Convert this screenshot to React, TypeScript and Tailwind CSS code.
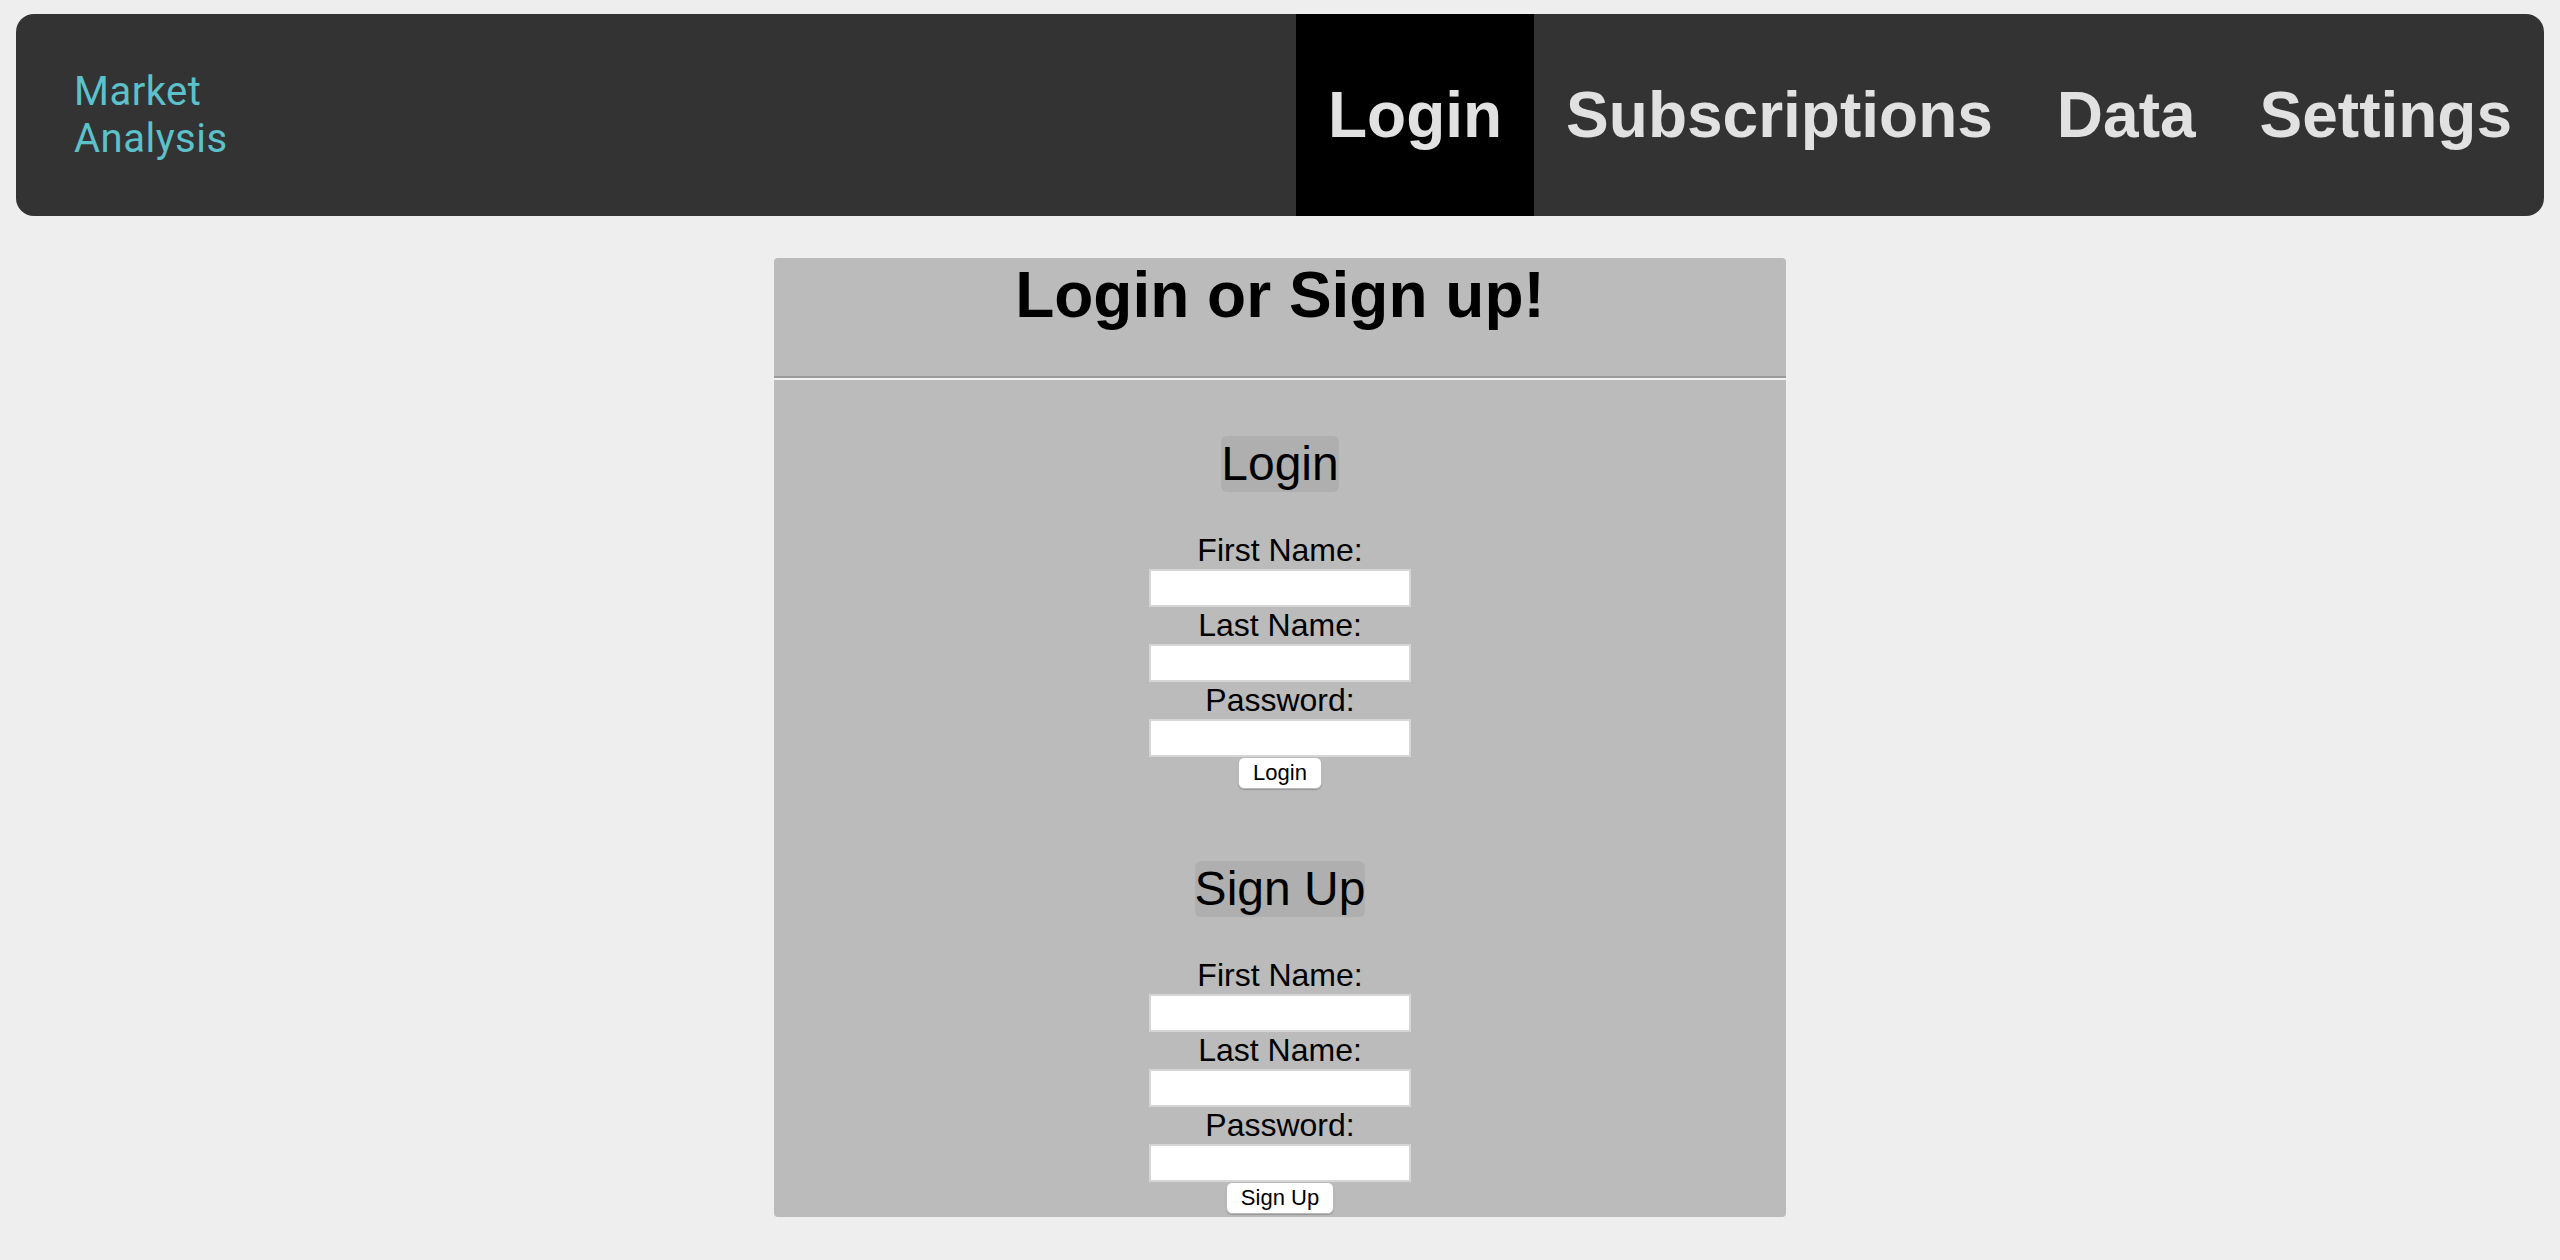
const navItems = ['Login', 'Subscriptions', 'Data', 'Settings'];

function Field({ label, type = 'text' }: { label: string; type?: string }) {
  return (
    <>
      <label className="block text-[32px] leading-[37px] text-black">{label}</label>
      <input
        type={type}
        className="block mx-auto h-[38px] w-[262px] bg-white border-2 border-[#d6d6d6] outline-none"
      />
    </>
  );
}

function AuthForm({ title, button }: { title: string; button: string }) {
  return (
    <div className="flex flex-col items-center">
      <h2 className="inline-block h-[56px] leading-[56px] text-[48px] font-normal bg-[#afafaf] rounded-md">
        {title}
      </h2>
      <form className="mt-[40px] text-center" onSubmit={(e) => e.preventDefault()}>
        <Field label="First Name:" />
        <Field label="Last Name:" />
        <Field label="Password:" type="password" />
        <button
          type="submit"
          className="h-[32px] px-[14px] text-[22px] leading-none bg-white rounded-[6px] border border-[#b9b9b9] shadow-[0_1px_1px_rgba(0,0,0,0.2)]"
        >
          {button}
        </button>
      </form>
    </div>
  );
}

export default function App() {
  return (
    <div className="min-h-[1260px] bg-[#eeeeee] pt-[14px] font-['Liberation_Sans',Arial,sans-serif] text-black">
      <nav className="mx-4 h-[202px] flex items-stretch justify-between bg-[#333333] rounded-[18px] overflow-hidden">
        <div className="pl-[58px] flex items-center">
          <span className="font-['Roboto',sans-serif] text-[40px] leading-[47px] tracking-[0.5px] text-[#5cc1cb]">
            Market
            <br />
            Analysis
          </span>
        </div>
        <ul className="flex items-stretch">
          {navItems.map((item) => (
            <li
              key={item}
              className={`flex items-center px-8 text-[64px] font-bold text-[#e1e1e1] ${item === 'Login' ? 'bg-black' : ''}`}
            >
              {item}
            </li>
          ))}
        </ul>
      </nav>

      <main className="w-[1012px] mx-auto mt-[42px] bg-[#bbbbbb] rounded-[4px] pb-[3px]">
        <div className="h-[118px] text-center">
          <h1 className="text-[64px] leading-[74px] font-bold">Login or Sign up!</h1>
        </div>
        <div className="border-t-2 border-b-2 border-t-[#9a9a9a] border-b-[#f2f2f2]" />
        <div className="pt-[56px]">
          <AuthForm title="Login" button="Login" />
        </div>
        <div className="pt-[72px]">
          <AuthForm title="Sign Up" button="Sign Up" />
        </div>
      </main>
    </div>
  );
}
